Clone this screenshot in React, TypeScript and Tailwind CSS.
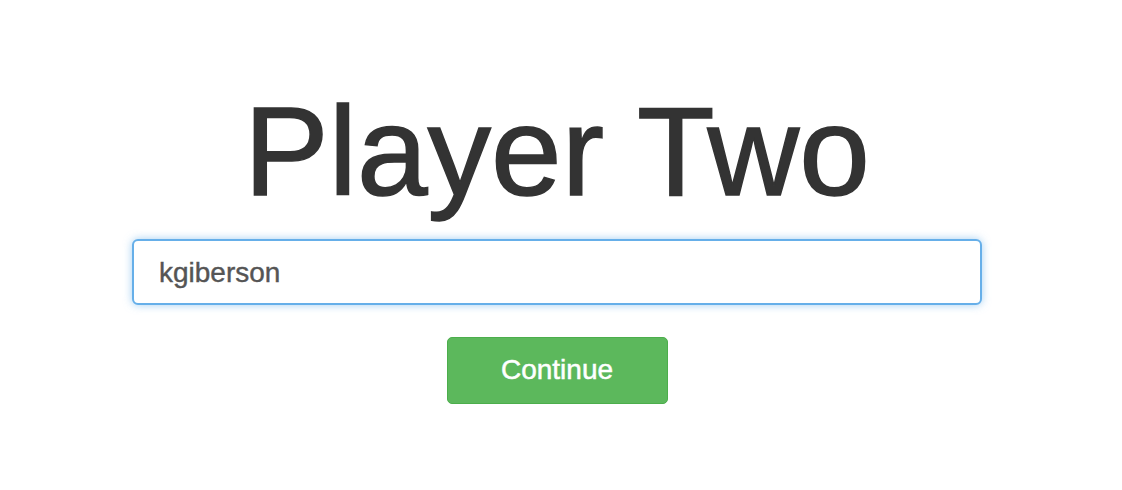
import { useState } from 'react'

export default function App() {
  const [name, setName] = useState('kgiberson')

  return (
    <div className="min-h-[490px] w-full bg-white font-['Liberation_Sans',Arial,sans-serif]">
      <div className="flex flex-col items-center pt-[82px] pl-[132px] pr-[140px]">
        <h1 className="text-[127px] leading-[1.1] font-normal text-[#333] [-webkit-text-stroke:1.5px_#333]">Player Two</h1>

        <input
          type="text"
          value={name}
          onChange={(e) => setName(e.target.value)}
          className="mt-[17px] h-[66px] w-full rounded-[6px] border-2 border-[#66afe9] bg-white px-[25px] pt-[3px] text-[28px] text-[#555] shadow-[0_0_8px_rgba(102,175,233,0.6)] outline-none [-webkit-text-stroke:0.4px_#555]"
        />

        <button
          type="button"
          className="mt-[32px] h-[67px] w-[221px] rounded-[5px] border border-[#4cae4c] bg-[#5cb85c] text-[28px] text-white [-webkit-text-stroke:0.5px_#fff]"
        >
          Continue
        </button>
      </div>
    </div>
  )
}
